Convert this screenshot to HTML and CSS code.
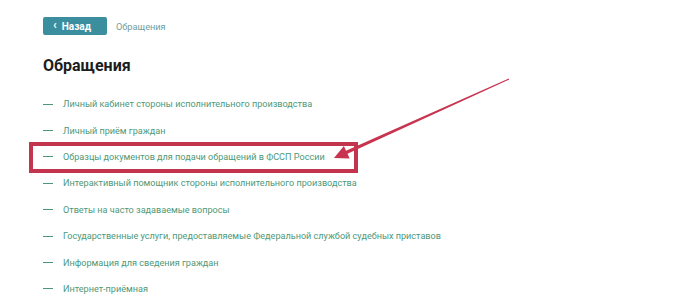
FILE: index.html
```html
<!DOCTYPE html>
<html lang="ru">
<head>
    <meta charset="UTF-8">
    <title>Обращения</title>
    <link rel="stylesheet" href="styles.css">
</head>
<body>

    <div class="page">
        <div class="topbar">
            <a class="back-btn" href="#"><span class="chev">&lsaquo;</span> Назад</a>
            <span class="crumb">Обращения</span>
        </div>

        <h1 class="title">Обращения</h1>

        <ul class="links">
            <li>Личный кабинет стороны исполнительного производства</li>
            <li>Личный приём граждан</li>
            <li>Образцы документов для подачи обращений в ФССП России</li>
            <li>Интерактивный помощник стороны исполнительного производства</li>
            <li>Ответы на часто задаваемые вопросы</li>
            <li>Государственные услуги, предоставляемые Федеральной службой судебных приставов</li>
            <li>Информация для сведения граждан</li>
            <li>Интернет-приёмная</li>
        </ul>
    </div>

    <!-- annotation drawn over the page -->
    <svg class="markup" width="700" height="304" viewBox="0 0 700 304">
        <rect x="31" y="144" width="325" height="27" fill="none" stroke="#c3354f" stroke-width="4"/>
        <polygon fill="#c8344f" points="334,158 343.9,145.9 346,150.7 508.8,78.6 509.2,79.4 347.5,153.8 349.6,158.6"/>
    </svg>

</body>
</html>
```

FILE: styles.css
```css
body {
    margin: 0;
    background-color: #fff;
    font-family: 'Roboto', 'Noto Sans', sans-serif;
    position: relative;
    width: 700px;
    height: 304px;
    overflow: hidden;
}

.page {
    padding: 17px 0 0 43px;
}

.topbar {
    display: flex;
    align-items: center;
    gap: 9px;
}

.back-btn {
    display: flex;
    align-items: center;
    gap: 5px;
    box-sizing: border-box;
    width: 64px;
    height: 18px;
    padding-left: 10px;
    background-color: #3b8e9d;
    border-radius: 2px;
    color: #fff;
    font-size: 10px;
    font-weight: 700;
    text-decoration: none;
}

.chev {
    font-size: 12px;
    line-height: 1;
    margin-top: -2px;
}

.crumb {
    font-size: 9.2px;
    color: #6f9ea0;
}

.title {
    margin: 21px 0 0;
    font-size: 16px;
    line-height: 20px;
    font-weight: 700;
    color: #1c1c1c;
}

.links {
    list-style: none;
    margin: 15px 0 0;
    padding: 0;
}

.links li {
    display: flex;
    align-items: center;
    height: 26.4px;
    font-size: 9.1px;
    color: #4e9878;
}

.links li::before {
    content: "";
    width: 10px;
    height: 1px;
    background-color: #4e9878;
    margin-right: 10px;
}

.markup {
    position: absolute;
    left: 0;
    top: 0;
}
```
